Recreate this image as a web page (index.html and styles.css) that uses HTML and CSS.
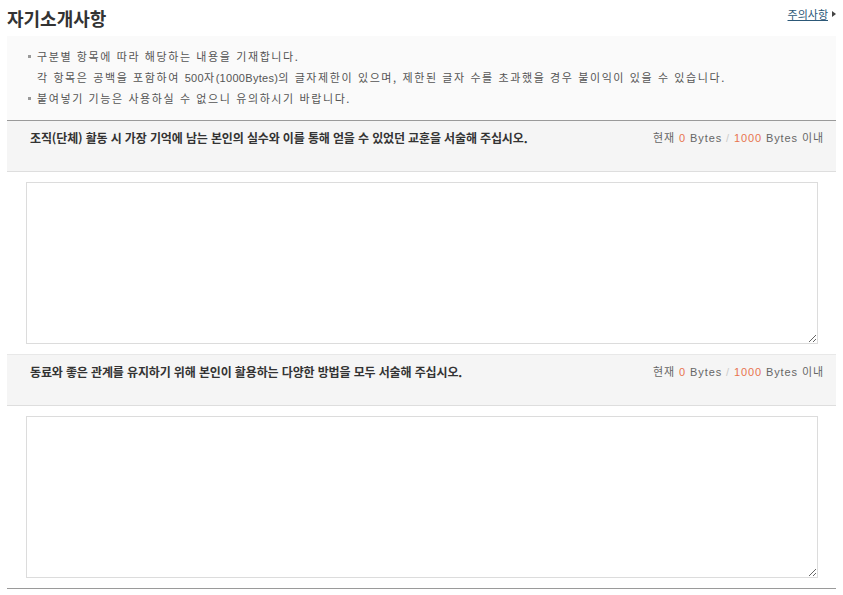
FILE: index.html
```html
<!DOCTYPE html>
<html lang="ko">
<head>
  <meta charset="UTF-8" />
  <title>자기소개사항</title>
  <link rel="stylesheet" href="styles.css">
</head>
<body>
  <div class="title-row">
    <h2>자기소개사항</h2>
    <a href="#" class="notice-link">주의사항</a>
  </div>

  <!-- 안내 -->
  <div class="notice">
    <ul>
      <li>구분별 항목에 따라 해당하는 내용을 기재합니다.<br>각 항목은 공백을 포함하여 <span class="num">500</span>자<span class="num">(1000Bytes)</span>의 글자제한이 있으며, 제한된 글자 수를 초과했을 경우 불이익이 있을 수 있습니다.</li>
      <li>붙여넣기 기능은 사용하실 수 없으니 유의하시기 바랍니다.</li>
    </ul>
  </div>

  <!-- 문항 -->
  <div class="questions">
    <div class="question">
      <div class="q-head">
        <p class="q-title">조직(단체) 활동 시 가장 기억에 남는 본인의 실수와 이를 통해 얻을 수 있었던 교훈을 서술해 주십시오.</p>
        <p class="counter">현재 <em>0</em> Bytes <span class="slash">/</span> <em>1000</em> Bytes 이내</p>
      </div>
      <div class="q-body">
        <textarea></textarea>
      </div>
    </div>
    <div class="question">
      <div class="q-head">
        <p class="q-title">동료와 좋은 관계를 유지하기 위해 본인이 활용하는 다양한 방법을 모두 서술해 주십시오.</p>
        <p class="counter">현재 <em>0</em> Bytes <span class="slash">/</span> <em>1000</em> Bytes 이내</p>
      </div>
      <div class="q-body">
        <textarea></textarea>
      </div>
    </div>
  </div>
</body>
</html>
```

FILE: styles.css
```css
body {
  margin: 0;
  padding: 0 7px;
  font-family: "Noto Sans CJK KR", "Noto Sans", sans-serif;
  color: #333;
  background: #fff;
}
.title-row {
  display: flex;
  justify-content: space-between;
  align-items: flex-start;
  height: 36px;
}
.title-row h2 {
  margin: 0;
  padding-top: 5px;
  font-size: 18px;
  line-height: 26px;
  font-weight: bold;
  color: #333;
}
.notice-link {
  margin-top: 6px;
  padding-right: 8px;
  font-size: 11px;
  line-height: 16px;
  color: #2c5877;
  text-decoration: underline;
  position: relative;
}
.notice-link::after {
  content: "";
  position: absolute;
  right: 0;
  top: 5px;
  border-left: 4px solid #444;
  border-top: 3px solid transparent;
  border-bottom: 3px solid transparent;
}
.notice {
  background: #fafafa;
  padding: 10px 0 11px 21px;
  border-bottom: 1px solid #9a9a9a;
}
.notice ul {
  margin: 0;
  padding: 0;
  list-style: none;
}
.notice li {
  position: relative;
  padding-left: 9px;
  font-size: 11px;
  line-height: 21px;
  color: #555;
  letter-spacing: 1.6px;
}
.notice li::before {
  content: "";
  position: absolute;
  left: 0;
  top: 9px;
  width: 3px;
  height: 3px;
  background: #999;
}
.notice .num {
  font-family: "Liberation Sans", sans-serif;
  line-height: 12px;
  letter-spacing: 0.3px;
}
.questions {
  border-bottom: 1px solid #9a9a9a;
}
.q-head {
  display: flex;
  justify-content: space-between;
  align-items: flex-start;
  height: 50px;
  padding: 0 12px 0 23px;
  background: #f5f5f5;
  border-bottom: 1px solid #dedede;
}
.question + .question .q-head {
  border-top: 1px solid #e8e8e8;
}
.q-title {
  margin: 9px 0 0;
  font-size: 12px;
  line-height: 16px;
  font-weight: bold;
  color: #333;
  letter-spacing: -0.13px;
}
.counter {
  margin: 9px 0 0;
  font-family: "Liberation Sans", "Noto Sans CJK KR", sans-serif;
  font-size: 11px;
  line-height: 16px;
  color: #666;
  letter-spacing: 0.9px;
}
.counter em {
  font-style: normal;
  color: #e8734f;
}
.counter .slash {
  color: #ccc;
}
.q-body {
  padding: 10px 18px 10px 19px;
}
.q-body textarea {
  display: block;
  box-sizing: border-box;
  width: 100%;
  height: 162px;
  margin: 0;
  border: 1px solid #dcdcdc;
  font-family: inherit;
}
```
